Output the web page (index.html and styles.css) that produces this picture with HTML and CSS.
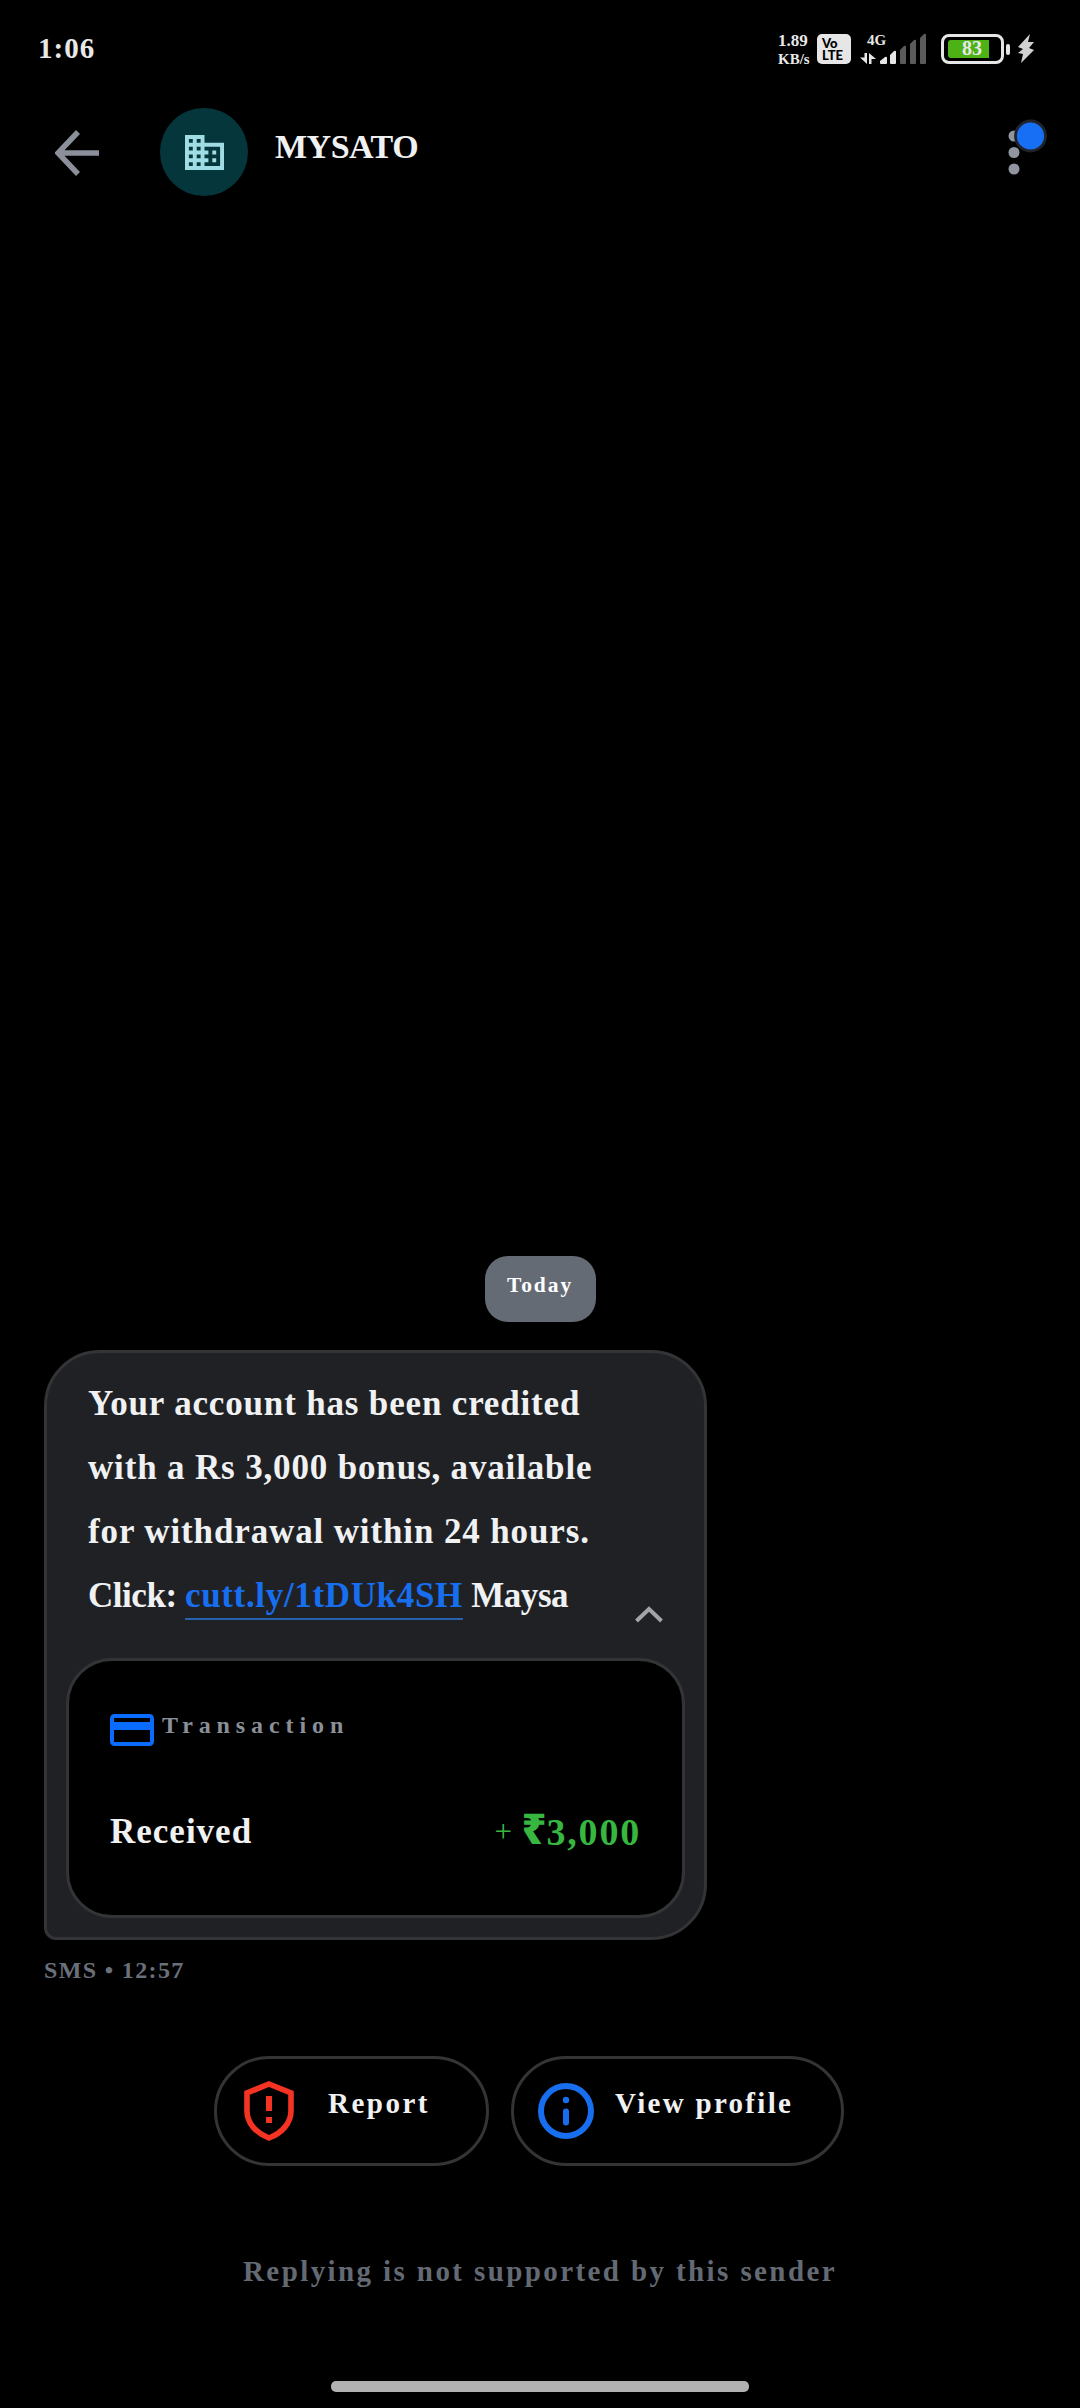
FILE: index.html
```html
<!DOCTYPE html>
<html lang="en">
<head>
<meta charset="utf-8">
<title>MYSATO</title>
<link rel="stylesheet" href="styles.css">
</head>
<body>
<div class="screen">
  <header class="status">
    <span class="clock">1:06</span>
    <div class="net"><span class="rate">1.89</span><span class="unit">KB/s</span></div>
    <div class="volte"><span>Vo</span><span>LTE</span></div>
    <div class="cell">
      <span class="gen">4G</span>
      <svg class="signal" width="68" height="32" viewBox="0 0 68 32">
        <path fill="#e6e6e6" d="M4.500 21h2.500v11L0 25.500h4.500zM9 32V21l7 6h-4.500v5zM20 29l5-4q2-1 2 1v5q0 1-1 1h-5q-1 0-1-1zM30 23l4-4q2-1 2 1v11q0 1-1 1h-4q-1 0-1-1z"/>
        <path fill="#5b5b5b" d="M40 18l4-4q2-1 2 1v16q0 1-1 1h-4q-1 0-1-1zM50 12l4-4q2-1 2 1v22q0 1-1 1h-4q-1 0-1-1zM60 6l4-4q2-1 2 1v28q0 1-1 1h-4q-1 0-1-1z"/>
      </svg>
    </div>
    <div class="battery"><div class="charge"><span>83</span></div></div>
    <div class="tip"></div>
    <svg class="bolt" width="18" height="30" viewBox="0 0 18 30"><path fill="#d2d2d2" d="M13 0 1 13l5 2-5 4 5 1-2 9 13-13-5-2 5-6h-6z"/></svg>
  </header>

  <div class="appbar">
    <svg class="back" width="45" height="46" viewBox="0 0 45 46"><path d="M44 23H4M23 2 3 23l20 21" fill="none" stroke="#8b909a" stroke-width="5.500"/></svg>
    <div class="avatar">
      <svg width="39" height="35" viewBox="2 3 20 18" preserveAspectRatio="none"><path fill="#9fdce3" d="M12 7V3H2v18h20V7H12zM6 19H4v-2h2v2zm0-4H4v-2h2v2zm0-4H4V9h2v2zm0-4H4V5h2v2zm4 12H8v-2h2v2zm0-4H8v-2h2v2zm0-4H8V9h2v2zm0-4H8V5h2v2zm10 12h-8v-2h2v-2h-2v-2h2v-2h-2V9h8v10zm-2-8h-2v2h2v-2zm0 4h-2v2h2v-2z"/></svg>
    </div>
    <h1 class="sender">MYSATO</h1>
    <svg class="more" width="40" height="56" viewBox="0 0 40 56">
      <g fill="#90959f"><circle cx="6" cy="17" r="5.500"/><circle cx="6" cy="33.500" r="5.500"/><circle cx="6" cy="50" r="5.500"/></g>
      <circle cx="22.500" cy="17" r="15" fill="#176ff5" stroke="#20242a" stroke-width="2.800"/>
    </svg>
  </div>

  <main class="thread">
    <div class="day">Today</div>
    <section class="bubble">
      <p class="message">
        <span class="l1">Your account has been credited</span><br>
        <span class="l2">with a Rs 3,000 bonus, available</span><br>
        <span class="l3">for withdrawal within 24 hours.</span><br>
        <span class="l4">Click: </span><a class="link">cutt.ly/1tDUk4SH</a><span class="l4"> Maysa</span>
      </p>
      <svg class="chevron" width="28" height="17" viewBox="0 0 28 17"><path d="M1.500 15 14 3l12.500 12" fill="none" stroke="#a3a4a6" stroke-width="4"/></svg>
      <div class="card">
        <div class="card-head">
          <svg width="44" height="32" viewBox="0 0 44 32"><rect x="2" y="2" width="40" height="28" rx="2.500" fill="none" stroke="#0a6cff" stroke-width="4"/><path fill="#0a6cff" d="M2 8h40v8H2z"/></svg>
          <span>Transaction</span>
        </div>
        <div class="card-row">
          <span class="received">Received</span>
          <span class="amount"><span class="plus">+</span><span class="rupee">₹</span>3,000</span>
        </div>
      </div>
    </section>
    <div class="meta">SMS • 12:57</div>
    <div class="actions">
      <div class="button report">
        <svg width="50" height="60" viewBox="0 0 50 60"><path d="M25 3 47 12v18c0 12-9 22-22 27C12 52 3 42 3 30V12z" fill="none" stroke="#f53322" stroke-width="5.600"/><path fill="#f53322" d="M22 15h6v15h-6zM22 36h6v6h-6z"/></svg>
        <span>Report</span>
      </div>
      <div class="button profile">
        <svg width="56" height="56" viewBox="0 0 56 56"><circle cx="28" cy="28" r="25" fill="none" stroke="#176ff0" stroke-width="6"/><circle cx="28" cy="17" r="3.200" fill="#176ff0"/><path d="M28 28.500v11" stroke="#176ff0" stroke-width="6" stroke-linecap="round"/></svg>
        <span>View profile</span>
      </div>
    </div>
    <p class="notice">Replying is not supported by this sender</p>
    <div class="homebar"></div>
  </main>
</div>
</body>
</html>
```

FILE: styles.css
```css
* { box-sizing: border-box; }
body {
  margin: 0;
  background: #000;
  color: #f0f1f2;
  font-family: "Liberation Serif", "Times New Roman", serif;
  font-weight: 700;
}
svg { display: block; flex: none; }
span, h1 { white-space: pre; }
.screen {
  display: flex;
  flex-direction: column;
  width: 1080px;
  height: 2408px;
  background: #000;
  overflow: hidden;
}

.status {
  display: flex;
  align-items: flex-start;
  height: 98px;
  padding: 34px 44px 0 38px;
  color: #e8e8e8;
}
.clock { width: 740px; font-size: 29px; line-height: 29px; letter-spacing: 1px; }
.net { display: flex; flex-direction: column; width: 39px; line-height: 19px; margin-top: -3px; }
.rate { font-size: 17px; }
.unit { font-size: 15px; }
.volte {
  display: flex;
  flex-direction: column;
  flex: none;
  width: 34px;
  height: 30px;
  padding: 3px 0 0 5px;
  border-radius: 5px;
  background: #e6e6e6;
  color: #000;
  font: 900 13px/12px Lato, sans-serif;
}
.cell { position: relative; flex: none; width: 68px; margin-left: 9px; }
.gen { position: absolute; left: 7px; top: -3px; font-size: 15px; line-height: 18px; }
.signal { margin-top: -2px; }
.battery {
  flex: none;
  width: 63px;
  height: 30px;
  margin-left: 13px;
  padding: 3px 4px;
  border: 3px solid #e6e6e6;
  border-radius: 8px;
}
.charge { width: 41px; height: 18px; border-radius: 3px 0 0 3px; background: #4db216; padding-left: 14px; font-size: 20px; line-height: 16px; }
.tip { flex: none; width: 4px; height: 11px; margin: 10px 7px 0 2px; border-radius: 2px; background: #e6e6e6; }

.appbar { display: flex; align-items: flex-start; height: 160px; padding-top: 10px; }
.back { margin: 22px 60px 0 55px; }
.avatar {
  display: flex;
  flex: none;
  align-items: center;
  justify-content: center;
  width: 88px;
  height: 88px;
  border-radius: 50%;
  background: #05363b;
}
.sender { flex: none; width: 733px; margin: 22px 0 0 27px; font-size: 34px; line-height: 34px; letter-spacing: -0.500px; }
.more { margin-top: 11px; }

.thread { display: flex; flex-direction: column; flex: 1; }
.day {
  align-self: center;
  width: 111px;
  height: 66px;
  margin-top: 998px;
  border-radius: 23px;
  background: #656b75;
  color: #fff;
  font-size: 21.500px;
  line-height: 59px;
  letter-spacing: 1.900px;
  text-align: center;
}
.bubble {
  position: relative;
  width: 663px;
  height: 590px;
  margin: 28px 0 0 44px;
  padding: 19px 19px 17px;
  border: 3px solid #333436;
  border-radius: 56px 56px 56px 12px;
  background: #202125;
}
.message { margin: 0; padding-left: 22px; font-size: 35px; line-height: 64px; }
.l1 { letter-spacing: 0.830px; }
.l2 { letter-spacing: 0.840px; }
.l3 { letter-spacing: 0.870px; }
.l4 { letter-spacing: -0.450px; }
.link { color: #176ff0; letter-spacing: 0.660px; text-decoration: underline 2px #2861ae; text-underline-offset: 11px; }
.chevron { position: absolute; left: 588px; top: 253px; }
.card {
  display: flex;
  flex-direction: column;
  height: 260px;
  margin-top: 30px;
  padding: 53px 41px 0;
  border: 3px solid #333436;
  border-radius: 46px;
  background: #000;
}
.card-head { display: flex; gap: 8px; font-size: 24px; line-height: 23px; letter-spacing: 5.900px; color: #8b9098; }
.card-row { display: flex; justify-content: space-between; margin-top: 66px; line-height: 40px; }
.received { font-size: 35px; letter-spacing: 1px; }
.amount { display: flex; color: #37b740; font-size: 38px; letter-spacing: 1.800px; }
.plus { margin-right: 8px; font: 400 31px/40px "Liberation Serif", serif; }
.rupee { font: 900 42px/32px "Noto Sans", sans-serif; letter-spacing: 0; }
.meta { margin: 20px 0 0 44px; height: 96px; color: #6a707a; font-size: 24px; line-height: 20px; letter-spacing: 1.350px; }
.actions { display: flex; gap: 22px; margin-left: 214px; height: 110px; }
.button { display: flex; flex: none; align-items: center; height: 110px; border: 3px solid #333436; border-radius: 55px; font-size: 29px; }
.button span { margin-top: -15px; }
.report { width: 275px; padding-left: 27px; gap: 34px; letter-spacing: 2.500px; }
.profile { width: 333px; padding-left: 24px; gap: 21px; letter-spacing: 2.300px; }
.notice { margin: 90px 0 0; height: 125px; color: #646a74; font-size: 29px; line-height: 30px; letter-spacing: 2.400px; text-align: center; }
.homebar { align-self: center; width: 418px; height: 11px; border-radius: 5px; background: #b2b2b2; }
```
